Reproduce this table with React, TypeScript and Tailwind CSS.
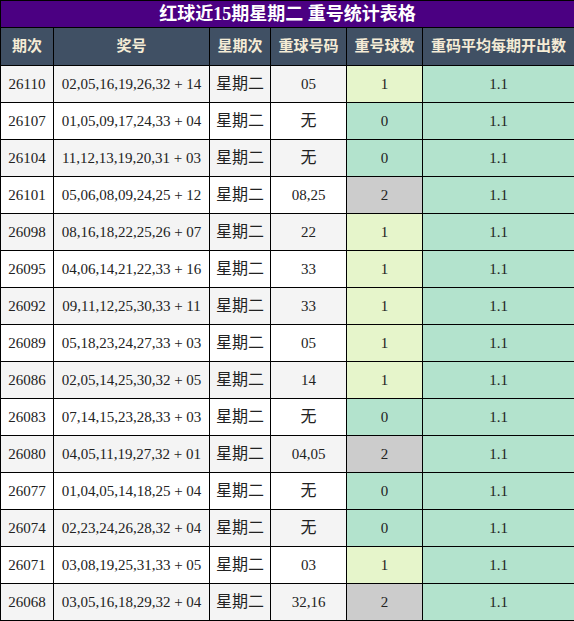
const rows: [string, string, string, string][] = [
  ["26110", "02,05,16,19,26,32 + 14", "05", "1"],
  ["26107", "01,05,09,17,24,33 + 04", "无", "0"],
  ["26104", "11,12,13,19,20,31 + 03", "无", "0"],
  ["26101", "05,06,08,09,24,25 + 12", "08,25", "2"],
  ["26098", "08,16,18,22,25,26 + 07", "22", "1"],
  ["26095", "04,06,14,21,22,33 + 16", "33", "1"],
  ["26092", "09,11,12,25,30,33 + 11", "33", "1"],
  ["26089", "05,18,23,24,27,33 + 03", "05", "1"],
  ["26086", "02,05,14,25,30,32 + 05", "14", "1"],
  ["26083", "07,14,15,23,28,33 + 03", "无", "0"],
  ["26080", "04,05,11,19,27,32 + 01", "04,05", "2"],
  ["26077", "01,04,05,14,18,25 + 04", "无", "0"],
  ["26074", "02,23,24,26,28,32 + 04", "无", "0"],
  ["26071", "03,08,19,25,31,33 + 05", "03", "1"],
  ["26068", "03,05,16,18,29,32 + 04", "32,16", "2"],
];

const countBg: Record<string, string> = {
  "0": "bg-[#b3e3cd]",
  "1": "bg-[#e6f5cb]",
  "2": "bg-[#cccccc]",
};

const heads = ["期次", "奖号", "星期次", "重球号码", "重号球数", "重码平均每期开出数"];

export default function App() {
  return (
    <div className="w-[574px] bg-white font-['Liberation_Serif','Noto_Sans_CJK_SC',serif] text-[15px] text-[#222]">
      <table className="w-[574px] table-fixed border-collapse border border-black text-center">
        <colgroup>
          <col className="w-[53px]" />
          <col className="w-[156px]" />
          <col className="w-[61px]" />
          <col className="w-[76px]" />
          <col className="w-[76px]" />
          <col className="w-[152px]" />
        </colgroup>
        <thead>
          <tr className="h-[27px]">
            <th colSpan={6} className="border border-black bg-[#4b0082] p-0 text-[18px] font-bold leading-none text-white">
              红球近15期星期二 重号统计表格
            </th>
          </tr>
          <tr className="h-[38px]">
            {heads.map((h) => (
              <th key={h} className="border border-black bg-[#405064] p-0 font-bold text-[#f5ecd6]">
                {h}
              </th>
            ))}
          </tr>
        </thead>
        <tbody>
          {rows.map((r, i) => {
            const bg = i % 2 === 0 ? "bg-[#f4f4f4]" : "bg-white";
            return (
              <tr key={r[0]} className="h-[37px]">
                <td className={`border border-black p-0 ${bg}`}>{r[0]}</td>
                <td className={`border border-black p-0 ${bg}`}>{r[1]}</td>
                <td className={`border border-black p-0 text-[16px] ${bg}`}>星期二</td>
                <td className={`border border-black p-0 ${r[2] === "无" ? "text-[16px]" : ""} ${bg}`}>{r[2]}</td>
                <td className={`border border-black p-0 ${countBg[r[3]]}`}>{r[3]}</td>
                <td className="border border-black bg-[#b3e3cd] p-0">1.1</td>
              </tr>
            );
          })}
        </tbody>
      </table>
    </div>
  );
}
